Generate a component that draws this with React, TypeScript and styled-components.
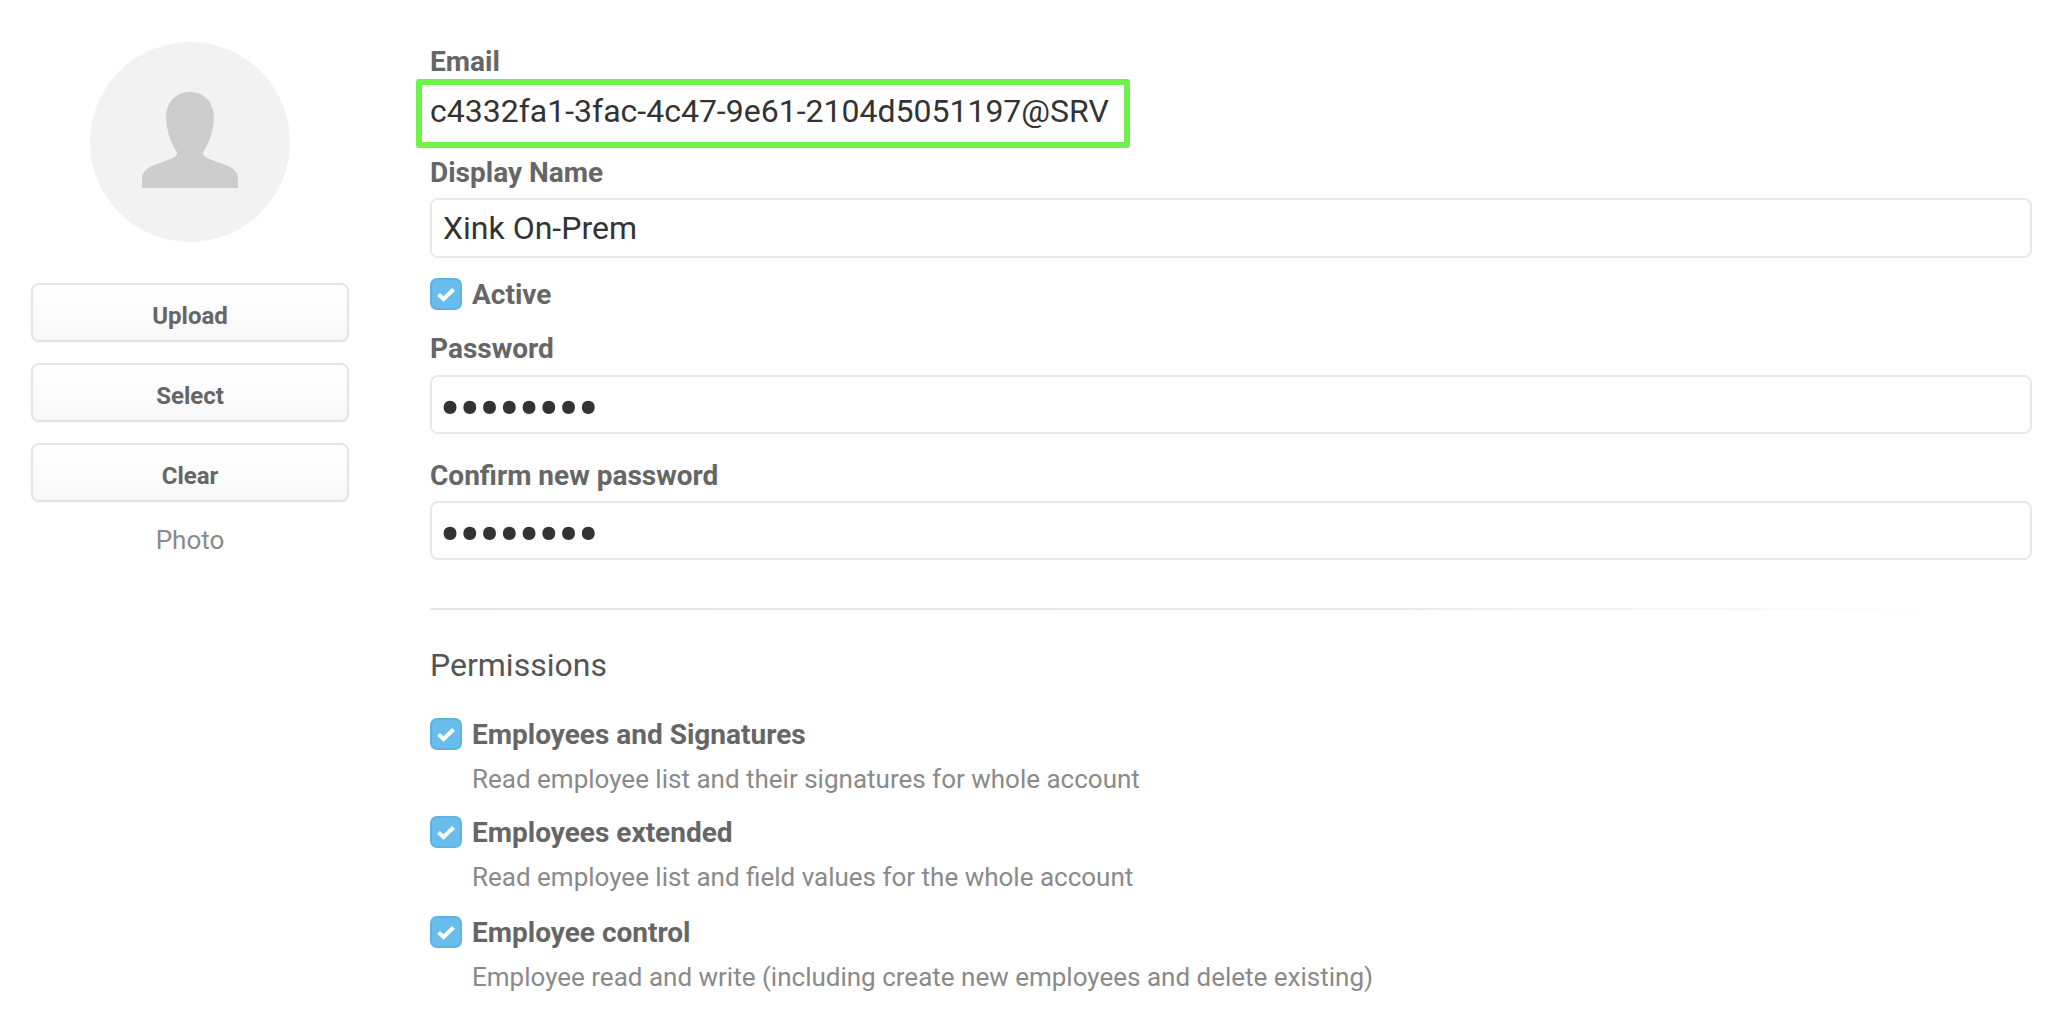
import React from "react";
import styled, { createGlobalStyle } from "styled-components";

const Global = createGlobalStyle`
  html, body { margin: 0; padding: 0; background: #fff; }
  body { font-family: Roboto, "Liberation Sans", sans-serif; height: 1018px; overflow: hidden; }
  * { box-sizing: border-box; }
`;

const Page = styled.div`
  display: flex;
  align-items: flex-start;
  width: 2052px;
  height: 1018px;
  overflow: hidden;
  padding: 0 20px 0 31px;
`;

const Sidebar = styled.aside`
  width: 318px;
  flex: none;
  padding-top: 42px;
  display: flex;
  flex-direction: column;
  align-items: center;
`;

const Avatar = styled.div`
  width: 200px;
  height: 200px;
  padding-bottom: 4px;
  border-radius: 50%;
  background: #f2f2f2;
  display: flex;
  align-items: center;
  justify-content: center;
  margin-bottom: 41px;
`;

const PhotoButton = styled.button`
  width: 318px;
  height: 59px;
  margin-bottom: 21px;
  border: 2px solid #e4e4e4;
  border-radius: 8px;
  background: linear-gradient(#ffffff, #f8f8f8);
  box-shadow: 0 1px 2px rgba(0, 0, 0, 0.04);
  font: 700 24px/1 Roboto, sans-serif;
  color: #666;
  padding: 7px 0 0;
`;

const PhotoCaption = styled.div`
  font-size: 26px;
  line-height: 30px;
  color: #8a8a8a;
  margin-top: 2px;
`;

const Main = styled.main`
  flex: 1;
  margin-left: 81px;
  padding-top: 49px;
`;

const Label = styled.label<{ $top: number; $bottom: number }>`
  display: block;
  font-size: 28px;
  font-weight: 700;
  line-height: 26px;
  color: #666;
  margin-top: ${(p) => p.$top}px;
  margin-bottom: ${(p) => p.$bottom}px;
`;

const Highlighted = styled.div`
  width: 714px;
  height: 69px;
  margin-left: -14px;
  padding: 0 0 5px 8px;
  border: 6px solid #6ff24a;
  border-radius: 3px;
  display: flex;
  align-items: center;
  font-size: 32px;
  color: #333;
  white-space: nowrap;
`;

const Input = styled.input<{ $masked?: boolean }>`
  display: block;
  width: 100%;
  height: ${(p) => (p.$masked ? 59 : 60)}px;
  padding: ${(p) => (p.$masked ? "8px 8px 0" : "0 11px")};
  border: 2px solid #e8e8e8;
  border-radius: 8px;
  outline: none;
  background: #fff;
  font: ${(p) => (p.$masked ? "700 55px Roboto, sans-serif" : "400 32px Roboto, sans-serif")};
  color: #333;
`;

const CheckRow = styled.div<{ $top: number }>`
  display: flex;
  align-items: center;
  gap: 10px;
  height: 32px;
  margin-top: ${(p) => p.$top}px;
`;

const CheckBox = styled.span`
  width: 32px;
  height: 32px;
  flex: none;
  border-radius: 7px;
  background: #68bdec;
  border: 2px solid #5fb3e3;
  display: flex;
  align-items: center;
  justify-content: center;
`;

const CheckText = styled.span`
  font-size: 28px;
  font-weight: 700;
  color: #666;
`;

const Divider = styled.hr`
  height: 2px;
  border: 0;
  margin: 48px 0 0;
  width: 1510px;
  background: linear-gradient(to right, #e4e4e4 0%, #e8e8e8 60%, #ffffff 100%);
`;

const Heading = styled.h3`
  font-size: 32px;
  font-weight: 400;
  line-height: 40px;
  color: #555;
  margin: 35px 0 33px;
`;

const Description = styled.div`
  font-size: 26px;
  line-height: 30px;
  color: #8a8a8a;
  margin: 14px 0 0 42px;
  white-space: nowrap;
`;

const Check = () => (
  <CheckBox>
    <svg width="20" height="16" viewBox="0 0 20 16">
      <path d="M2.5 8.5 L7.5 13 L17.5 3.5" fill="none" stroke="#fff" strokeWidth="4" />
    </svg>
  </CheckBox>
);

const permissions = [
  { title: "Employees and Signatures", text: "Read employee list and their signatures for whole account", top: 0 },
  { title: "Employees extended", text: "Read employee list and field values for the whole account", top: 22 },
  { title: "Employee control", text: "Employee read and write (including create new employees and delete existing)", top: 24 },
];

export default function App() {
  return (
    <Page>
      <Global />
      <Sidebar>
        <Avatar>
          <svg width="96" height="96" viewBox="0 0 96 96">
            <path
              d="M0 96V87C0 80 5 76 10 74L26 68C32 66 36 63 35 60C30 53 25 42 24 26C24 10 34 0 48 0C62 0 72 10 72 26C71 42 66 53 61 60C60 63 64 66 70 68L86 74C91 76 96 80 96 87V96Z"
              fill="#cdcdcd"
            />
          </svg>
        </Avatar>
        <PhotoButton>Upload</PhotoButton>
        <PhotoButton>Select</PhotoButton>
        <PhotoButton>Clear</PhotoButton>
        <PhotoCaption>Photo</PhotoCaption>
      </Sidebar>
      <Main>
        <Label $top={0} $bottom={4}>Email</Label>
        <Highlighted>c4332fa1-3fac-4c47-9e61-2104d5051197@SRV</Highlighted>
        <Label $top={12} $bottom={12}>Display Name</Label>
        <Input readOnly value="Xink On-Prem" />
        <CheckRow $top={20}>
          <Check />
          <CheckText>Active</CheckText>
        </CheckRow>
        <Label $top={26} $bottom={13}>Password</Label>
        <Input $masked readOnly type="password" value="12345678" />
        <Label $top={29} $bottom={12}>Confirm new password</Label>
        <Input $masked readOnly type="password" value="12345678" />
        <Divider />
        <Heading>Permissions</Heading>
        {permissions.map((p) => (
          <div key={p.title}>
            <CheckRow $top={p.top}>
              <Check />
              <CheckText>{p.title}</CheckText>
            </CheckRow>
            <Description>{p.text}</Description>
          </div>
        ))}
      </Main>
    </Page>
  );
}
